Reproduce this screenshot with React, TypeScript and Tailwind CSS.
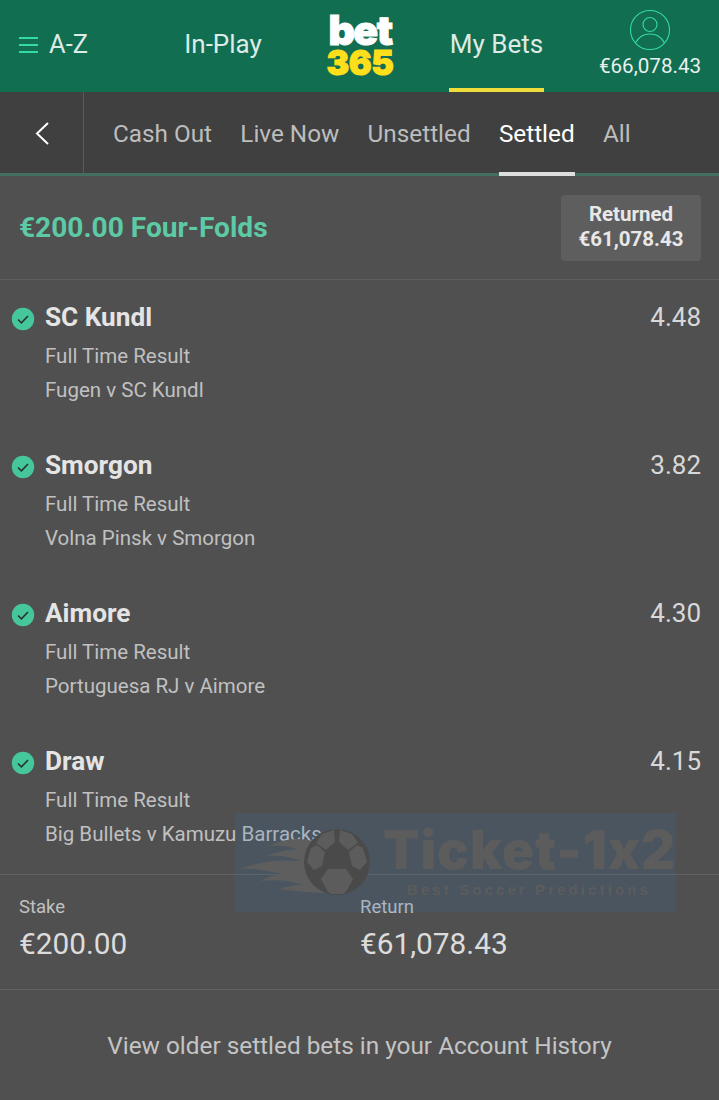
import React from "react";

const selections = [
  { name: "SC Kundl", odds: "4.48", match: "Fugen v SC Kundl" },
  { name: "Smorgon", odds: "3.82", match: "Volna Pinsk v Smorgon" },
  { name: "Aimore", odds: "4.30", match: "Portuguesa RJ v Aimore" },
  { name: "Draw", odds: "4.15", match: "Big Bullets v Kamuzu Barracks" },
];

const tabs = ["Cash Out", "Live Now", "Unsettled", "Settled", "All"];

const CheckIcon = () => (
  <svg width="24" height="24" viewBox="0 0 24 24" className="shrink-0 mt-[4px]">
    <circle cx="12" cy="12" r="11.2" fill="#45c79b" />
    <path d="M7 12.5l3.4 3.4L17 9" fill="none" stroke="#26352f" strokeWidth="1.6" />
  </svg>
);

const Watermark = () => (
  <div className="absolute left-[235px] top-[813px] w-[441px] h-[99px] bg-[#2871bb]/15 pointer-events-none overflow-hidden">
    <svg width="145" height="99" viewBox="0 0 145 99" className="absolute left-0 top-0">
      <path
        d="M78 28C62 24 48 26 34 33C44 32 54 33 62 36C50 37 40 39 32 43C44 42 56 44 66 48C44 46 22 49 5 56C20 55 34 58 46 61C38 62 32 64 26 68C42 66 56 68 68 72C58 72 50 74 44 76C60 78 76 80 92 80Z"
        fill="#5e5e5e"
      />
      <circle cx="102" cy="49" r="33" fill="#4a4a4a" />
      <path d="M87 21l12-4 1 12-9 8-10-7z" fill="#5c5c5c" />
      <path d="M117 21l-12-4-1 12 9 8 10-7z" fill="#5c5c5c" />
      <path d="M76 35l6-3 8 7-3 14-8 4-7-8z" fill="#5c5c5c" />
      <path d="M128 35l-6-3-8 7 3 14 8 4 7-8z" fill="#5c5c5c" />
      <path d="M93 56h18l7 10-7 13H93l-7-13z" fill="#5c5c5c" />
      <path d="M92 78h20l-4 3H96z" fill="#5c5c5c" />
    </svg>
    <div className="absolute left-[148px] top-[7px] font-['Inter',sans-serif] text-[53px] leading-[60px] font-black text-[#5c5c5c] whitespace-nowrap tracking-[1px] [font-feature-settings:'calt'_0]">
      Ticket-1x2
    </div>
    <div className="absolute left-[172px] top-[68px] font-['Liberation_Sans',sans-serif] text-[15px] leading-[18px] font-bold text-[#5c5c5c] whitespace-nowrap tracking-[3.1px]">
      Best Soccer Predictions
    </div>
  </div>
);

export default function App() {
  return (
    <div className="relative w-[719px] h-[1100px] bg-[#505050] font-['Roboto',sans-serif] overflow-hidden">
      <header className="h-[92px] bg-[#126e51] flex text-[#dcebe5]">
        <div className="w-[168px] flex items-center pl-[19px] gap-[11px] pb-[2px]">
          <div className="w-[19px] flex flex-col gap-[5px]">
            <span className="h-[2px] bg-[#35d9a3]" />
            <span className="h-[2px] bg-[#35d9a3]" />
            <span className="h-[2px] bg-[#35d9a3]" />
          </div>
          <span className="text-[25.5px] leading-none">A-Z</span>
        </div>
        <div className="w-[110px] flex items-center justify-center pb-[3px] text-[26px]">In-Play</div>
        <div className="w-[171px] flex flex-col items-center pt-[14px] pr-[7px] font-['Inter',sans-serif] font-black">
          <span className="text-[41px] leading-[33px] h-[34px] text-white tracking-[-1.5px] [-webkit-text-stroke:1px_#ffffff]">bet</span>
          <span className="text-[34px] leading-[29px] h-[29px] text-[#ffdf1b] tracking-[-0.5px] [-webkit-text-stroke:1px_#ffdf1b]">365</span>
        </div>
        <div className="w-[95px] h-[92px] flex items-center justify-center pt-[1px] text-[26px] border-b-[4px] border-[#f0dc3a] whitespace-nowrap">
          My Bets
        </div>
        <div className="flex-1 flex flex-col items-center pl-[37px] pt-[9px]">
          <svg width="42" height="42" viewBox="0 0 42 42" fill="none" stroke="#35d9a3" strokeWidth="1.1" className="shrink-0">
            <circle cx="21" cy="21" r="19.5" />
            <circle cx="21" cy="15.5" r="7" />
            <path d="M6.5 34c3-6 8-9 14.500-9s11.500 3 14.500 9" />
          </svg>
          <span className="text-[20.6px] leading-[24px] mt-[3px] text-[#e8f1ee] whitespace-nowrap">€66,078.43</span>
        </div>
      </header>

      <nav className="h-[84px] bg-[#404040] flex border-b-[3px] border-[#41705f]">
        <div className="w-[84px] border-r border-[#5a5a5a] flex items-center justify-center">
          <svg width="16" height="24" viewBox="0 0 16 24" fill="none" stroke="#ffffff" strokeWidth="2">
            <path d="M14 2L3 12.500 14 23" />
          </svg>
        </div>
        <div className="flex pl-[29px] gap-[28.3px] text-[24.3px]">
          {tabs.map((tab) => (
            <div
              key={tab}
              className={
                tab === "Settled"
                  ? "h-[84px] flex items-center text-white border-b-[4px] border-[#dedede] pt-[4px]"
                  : "h-[84px] flex items-center text-[#bdbdbd]"
              }
            >
              {tab}
            </div>
          ))}
        </div>
      </nav>

      <section className="h-[104px] flex items-center justify-between pl-[19px] pr-[18px] border-b border-[#5e5e5e]">
        <h1 className="text-[28.1px] font-bold text-[#5ccaa5] pt-[2px]">€200.00 Four-Folds</h1>
        <div className="w-[140px] h-[66px] rounded bg-[#5e5e5e] flex flex-col items-center justify-center pb-[2px] text-[20.5px] leading-[25px] font-bold text-[#e8e8e8]">
          <span>Returned</span>
          <span>€61,078.43</span>
        </div>
      </section>

      <div className="pt-[18px]">
        {selections.map((s) => (
          <div key={s.name} className="h-[148px] pl-[11px] pr-[18px]">
            <div className="flex items-center h-[38px]">
              <CheckIcon />
              <span className="ml-[10px] pt-[2px] text-[26.2px] font-bold text-[#e4e4e4]">{s.name}</span>
              <span className="ml-auto text-[26px] text-[#d8d8d8]">{s.odds}</span>
            </div>
            <div className="pl-[34px] text-[20.5px] leading-[34px] text-[#c0c0c0] mt-[3px] whitespace-nowrap">
              <div>Full Time Result</div>
              <div>{s.match}</div>
            </div>
          </div>
        ))}
      </div>

      <div className="absolute left-0 right-0 top-[874px] h-[116px] border-y border-[#626262] flex pl-[19px]">
        <div className="w-[341px] pt-[20px]">
          <div className="text-[18.5px] leading-[24px] text-[#c0c0c0]">Stake</div>
          <div className="text-[29.8px] leading-[36px] mt-[7px] text-[#dcdcdc]">€200.00</div>
        </div>
        <div className="pt-[20px]">
          <div className="text-[18.5px] leading-[24px] text-[#c0c0c0]">Return</div>
          <div className="text-[29.8px] leading-[36px] mt-[7px] text-[#dcdcdc]">€61,078.43</div>
        </div>
      </div>

      <div className="absolute left-0 right-0 top-[1030px] text-center text-[24.35px] leading-[32px] text-[#c4c4c4]">
        View older settled bets in your Account History
      </div>

      <Watermark />
    </div>
  );
}
